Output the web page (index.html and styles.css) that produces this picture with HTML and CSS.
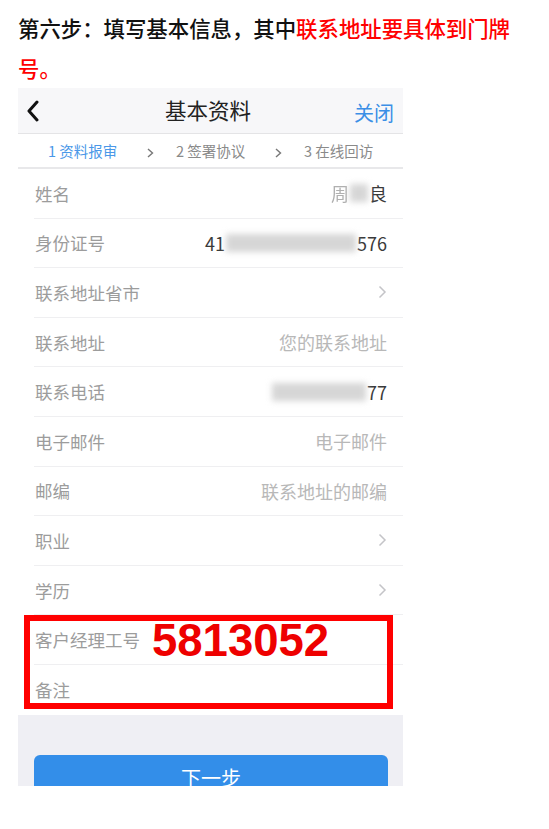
FILE: index.html
```html
<!DOCTYPE html>
<html lang="zh-CN">
<head>
    <meta charset="UTF-8">
    <meta name="viewport" content="width=device-width, initial-scale=1.0">
    <title>第六步 - 填写基本信息</title>
    <link rel="stylesheet" href="styles.css">
</head>
<body>
    <p class="intro">第六步：填写基本信息，其中<span class="hl">联系地址要具体到门牌号。</span></p>

    <section class="phone">
        <header class="topbar">
            <svg class="back" width="14" height="22" viewBox="0 0 14 22">
                <polyline points="11,2 3,11 11,20" fill="none" stroke="#111" stroke-width="3" stroke-linecap="round" stroke-linejoin="round"/>
            </svg>
            <h1>基本资料</h1>
            <a class="close" href="#">关闭</a>
        </header>

        <nav class="steps">
            <span class="step active">1 资料报审</span>
            <svg class="step-arrow" width="7" height="10" viewBox="0 0 7 10"><polyline points="1,1 5.5,5 1,9" fill="none" stroke="#777" stroke-width="1.4"/></svg>
            <span class="step">2 签署协议</span>
            <svg class="step-arrow" width="7" height="10" viewBox="0 0 7 10"><polyline points="1,1 5.5,5 1,9" fill="none" stroke="#777" stroke-width="1.4"/></svg>
            <span class="step">3 在线回访</span>
        </nav>

        <div class="form">
            <div class="row">
                <span class="label">姓名</span>
                <span class="value"><span class="faded">周</span><span class="mask" style="width:18px"></span>良</span>
            </div>
            <div class="row">
                <span class="label">身份证号</span>
                <span class="value">41<span class="mask" style="width:130px"></span>576</span>
            </div>
            <div class="row">
                <span class="label">联系地址省市</span>
                <svg class="chev" width="9" height="14" viewBox="0 0 9 14"><polyline points="1.5,1.5 7,7 1.5,12.5" fill="none" stroke="#c4c4c8" stroke-width="1.5"/></svg>
            </div>
            <div class="row">
                <span class="label">联系地址</span>
                <span class="value hint">您的联系地址</span>
            </div>
            <div class="row">
                <span class="label">联系电话</span>
                <span class="value"><span class="mask" style="width:94px"></span>77</span>
            </div>
            <div class="row">
                <span class="label">电子邮件</span>
                <span class="value hint">电子邮件</span>
            </div>
            <div class="row">
                <span class="label">邮编</span>
                <span class="value hint">联系地址的邮编</span>
            </div>
            <div class="row">
                <span class="label">职业</span>
                <svg class="chev" width="9" height="14" viewBox="0 0 9 14"><polyline points="1.5,1.5 7,7 1.5,12.5" fill="none" stroke="#c4c4c8" stroke-width="1.5"/></svg>
            </div>
            <div class="row">
                <span class="label">学历</span>
                <svg class="chev" width="9" height="14" viewBox="0 0 9 14"><polyline points="1.5,1.5 7,7 1.5,12.5" fill="none" stroke="#c4c4c8" stroke-width="1.5"/></svg>
            </div>
            <div class="marked">
                <div class="row">
                    <span class="label">客户经理工号</span>
                </div>
                <div class="row last">
                    <span class="label">备注</span>
                </div>
                <div class="redbox"></div>
                <span class="code">5813052</span>
            </div>
        </div>

        <div class="footer-area">
            <button class="btn">下一步</button>
        </div>
    </section>
</body>
</html>
```

FILE: styles.css
```css
body {
    margin: 0;
    padding: 0;
    background-color: #ffffff;
    font-family: "Noto Sans CJK SC", "Noto Sans", sans-serif;
}

.intro {
    margin: 0;
    padding: 8px 0 0 18px;
    width: 525px;
    font-size: 21.4px;
    line-height: 40px;
    font-weight: 500;
    color: #111111;
}

.intro .hl {
    color: #ff0000;
}

.phone {
    width: 385px;
    margin-left: 18px;
    background-color: #ffffff;
}

.topbar {
    height: 45px;
    background-color: #f7f7f9;
    border-bottom: 1px solid #e4e4e6;
    display: flex;
    align-items: center;
    justify-content: space-between;
    padding: 0 9px 0 8px;
}

.topbar h1 {
    margin: 0;
    font-size: 21.5px;
    font-weight: 400;
    color: #222222;
    padding-left: 22px;
    padding-bottom: 2px;
}

.close {
    color: #3b8fe6;
    font-size: 20px;
    text-decoration: none;
    padding-top: 4px;
}

.back {
    display: block;
}

.steps {
    height: 33px;
    border-bottom: 2px solid #e8e8ea;
    display: flex;
    align-items: center;
    padding-left: 30px;
}

.step {
    font-size: 14.5px;
    color: #8a8a8a;
    width: 99px;
}

.step.active {
    color: #4a98e8;
}

.step-arrow {
    margin: 4px 22px 0 0;
}

.form {
    padding-left: 16px;
}

.row {
    height: 48.6px;
    border-bottom: 1px solid #efeff1;
    display: flex;
    align-items: center;
    justify-content: space-between;
    padding: 0 16px 0 1px;
}

.row.last {
    height: 50px;
    border-bottom: none;
}

.label {
    font-size: 17.5px;
    color: #9c9c9c;
}

.value {
    font-size: 18px;
    color: #3a3a3a;
    display: flex;
    align-items: center;
}

.value.hint {
    color: #b8b8b8;
}

.faded {
    color: #b0b0b0;
    filter: blur(0.6px);
}

.mask {
    display: inline-block;
    height: 18px;
    background-color: #d6d6d6;
    filter: blur(3px);
    margin: 0 1px;
}

.chev {
    display: block;
}

.marked {
    position: relative;
}

.redbox {
    position: absolute;
    left: -10px;
    top: 0;
    width: 357px;
    height: 82px;
    border: 6px solid #ff0000;
}

.code {
    position: absolute;
    left: 118px;
    top: 0;
    font-family: "Liberation Sans", Arial, sans-serif;
    font-weight: 700;
    font-size: 45.5px;
    color: #ee0000;
}

.footer-area {
    height: 71px;
    background-color: #efeff4;
    overflow: hidden;
    padding: 40px 15px 0 16px;
    box-sizing: border-box;
}

.btn {
    width: 100%;
    height: 46px;
    border: none;
    border-radius: 6px;
    background-color: #338ee9;
    color: #ffffff;
    font-family: "Noto Sans CJK SC", sans-serif;
    font-size: 20px;
}
```
